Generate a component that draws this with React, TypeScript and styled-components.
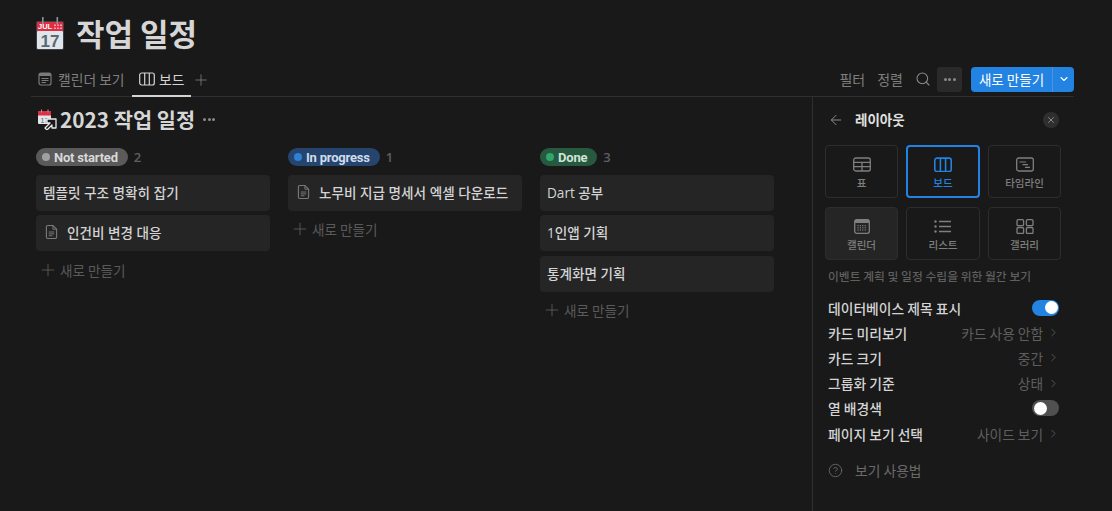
import React from "react";
import styled, { createGlobalStyle } from "styled-components";
import { ArrowLeft, ChevronDown, ChevronRight, CircleHelp, Plus, Search, X } from "lucide-react";

const Global = createGlobalStyle`
  html, body { margin: 0; padding: 0; background: #191919; height: 100%; overflow: hidden; }
  #root { height: 100%; }
  * { box-sizing: border-box; }
`;

const Page = styled.div`
  width: 1112px; height: 511px; background: #191919; overflow: hidden;
  display: flex; flex-direction: column;
  font-family: "Open Sans", "Noto Sans CJK KR", sans-serif;
  color: #d4d4d4;
`;
const Header = styled.header`
  height: 97px; padding: 0 38px 0 31px; display: flex; flex-direction: column; flex: none;
`;
const TitleRow = styled.div`
  height: 66px; padding: 12px 0 0 4px; display: flex; align-items: flex-start; gap: 11px;
`;
const Title = styled.h1`
  margin: 0; font-size: 31px; line-height: 42px; font-weight: 700; color: #d6d6d6;
  font-family: "Noto Sans CJK KR", sans-serif; white-space: nowrap;
`;
const TabBar = styled.div`
  height: 31px; display: flex; align-items: flex-start; border-bottom: 1px solid #2f2f2f;
`;
const Tab = styled.div<{ $active?: boolean }>`
  height: 31px; display: flex; align-items: center; gap: ${(p) => (p.$active ? "4px" : "6px")};
  padding: 0 7px 3px; width: ${(p) => (p.$active ? "59px" : "101px")};
  font-size: 13.8px; white-space: nowrap;
  color: ${(p) => (p.$active ? "#d4d4d4" : "#7f7f7f")};
  border-bottom: ${(p) => (p.$active ? "2px solid #d4d4d4" : "2px solid transparent")};
  font-family: "Noto Sans CJK KR", sans-serif;
  svg { flex: none; }
`;
const TabPlus = styled.div`
  height: 28px; width: 20px; display: flex; align-items: center; justify-content: center; color: #777;
`;
const Spacer = styled.div`flex: 1;`;
const Tools = styled.div`
  height: 26px; display: flex; align-items: center;
`;
const ToolText = styled.span<{ $last?: boolean }>`
  font-size: 14px; color: #7f7f7f; margin-right: ${(p) => (p.$last ? "7px" : "12px")}; white-space: nowrap;
  font-family: "Noto Sans CJK KR", sans-serif;
`;
const IconBtn = styled.div<{ $on?: boolean }>`
  width: 25px; height: 25px; border-radius: 3px; display: flex; align-items: center; justify-content: center;
  background: ${(p) => (p.$on ? "#2a2a2a" : "transparent")};
  margin-left: ${(p) => (p.$on ? "2px" : "0")};
  color: #8a8a8a;
`;
const NewButton = styled.div`
  margin-left: 9px; height: 25px; width: 103px; display: flex; border-radius: 4px; background: #2383e2; color: #fff;
  font-size: 13.5px; font-family: "Noto Sans CJK KR", sans-serif;
`;
const NewMain = styled.div`
  flex: 1; display: flex; align-items: center; justify-content: center; white-space: nowrap;
  border-right: 1px solid #4b95de;
`;
const NewDrop = styled.div`
  width: 21px; display: flex; align-items: center; justify-content: center;
`;
const Body = styled.div`
  flex: 1; display: flex; min-height: 0;
`;
const Board = styled.main`
  flex: 1; padding: 8px 0 0 36px; display: flex; flex-direction: column; min-width: 0;
`;
const DbTitleRow = styled.div`
  height: 28px; display: flex; align-items: center; margin-bottom: 15px;
`;
const DbTitle = styled.h2`
  margin: 0 8px 0 0; font-size: 20.8px; font-weight: 700; line-height: 28px; color: #d6d6d6; white-space: nowrap;
  font-family: "Noto Sans CJK KR", sans-serif;
`;
const Dots = styled.div`
  display: flex; gap: 1.5px; align-items: center;
`;
const Dot = styled.i<{ $size?: number; $color?: string }>`
  display: block; width: ${(p) => p.$size ?? 3}px; height: ${(p) => p.$size ?? 3}px; border-radius: 50%;
  background: ${(p) => p.$color ?? "#8a8a8a"}; flex: none;
`;
const Columns = styled.div`
  display: flex; gap: 18px;
`;
const Column = styled.section`
  width: 234px; display: flex; flex-direction: column;
`;
const GroupHeader = styled.div`
  height: 18px; display: flex; align-items: center; gap: 6px; margin-bottom: 9px;
`;
const Pill = styled.div<{ $bg: string; $fg: string }>`
  height: 18px; padding: 0 10px 0 6px; border-radius: 9px; background: ${(p) => p.$bg}; color: ${(p) => p.$fg};
  display: flex; align-items: center; gap: 4px; font-size: 13px; font-weight: 700; white-space: nowrap;
  letter-spacing: -0.2px; font-family: Roboto, "Noto Sans CJK KR", sans-serif;
`;
const Count = styled.span`
  font-size: 13px; color: #5f5f5f; font-weight: 600;
`;
const Card = styled.div`
  height: 36px; border-radius: 4px; background: #252525; display: flex; align-items: center; padding: 0 7px 2px;
  font-size: 13.6px; color: #d4d4d4; font-weight: 500; margin-bottom: 4.4px; white-space: nowrap; gap: 6px;
  font-family: "Open Sans", "Noto Sans CJK KR", sans-serif;
  svg { flex: none; margin-left: 2px; }
`;
const CardText = styled.span<{ $icon?: boolean }>`
  margin-left: ${(p) => (p.$icon ? "3px" : "0")};
`;
const AddRow = styled.div`
  height: 36px; margin-top: -4px; display: flex; align-items: center; gap: 2px; padding: 0 0 0 2px; color: #5a5a5a;
  font-size: 13.6px; font-family: "Noto Sans CJK KR", sans-serif;
`;
const Panel = styled.aside`
  width: 300px; flex: none; border-left: 1px solid #2f2f2f; padding: 0 51px 0 12px;
  display: flex; flex-direction: column;
`;
const PanelHead = styled.div`
  height: 46px; display: flex; align-items: center; padding: 0 0 0 3px; margin-bottom: 2px;
`;
const PanelTitle = styled.div`
  flex: 1; margin: 0 0 3px 11px; font-size: 13.5px; font-weight: 700; color: #e0e0e0;
  font-family: "Noto Sans CJK KR", sans-serif;
`;
const CloseBtn = styled.div`
  width: 16px; height: 16px; border-radius: 50%; background: #2f2f2f; color: #9a9a9a; margin-right: 2px;
  display: flex; align-items: center; justify-content: center;
`;
const LayoutGrid = styled.div`
  display: grid; grid-template-columns: 73px 74px 73px; grid-auto-rows: 53px; column-gap: 8px; row-gap: 9px;
  width: 236px; margin-right: -16px;
`;
const Tile = styled.div<{ $sel?: boolean; $hover?: boolean }>`
  border-radius: 4px;
  border: ${(p) => (p.$sel ? "2px solid #2383e2" : "1px solid #2d2d2d")};
  background: ${(p) => (p.$hover ? "#252525" : "transparent")};
  color: ${(p) => (p.$sel ? "#2383e2" : "#7f7f7f")};
  display: flex; flex-direction: column; align-items: center; justify-content: center; gap: 3px;
  font-size: 10.5px; font-weight: 500; font-family: "Noto Sans CJK KR", sans-serif;
  padding-top: 4px;
  span { line-height: 15px; }
`;
const Desc = styled.div`
  margin: 7px -20px 0 3px; font-size: 11.8px; line-height: 18px; color: #5f5f5f; white-space: nowrap;
  font-family: "Noto Sans CJK KR", sans-serif; font-weight: 500;
`;
const Rows = styled.div`
  margin: 10px -1px 0 3px; display: flex; flex-direction: column; width: 231px;
`;
const Row = styled.div`
  height: 25.2px; display: flex; align-items: center; justify-content: space-between;
  font-size: 13.8px; font-weight: 500; color: #d4d4d4; white-space: nowrap;
  font-family: "Noto Sans CJK KR", sans-serif;
`;
const RowValue = styled.div`
  display: flex; align-items: center; gap: 4px; color: #5f5f5f; font-weight: 400; font-size: 13.7px;
  margin-right: -1px;
`;
const Toggle = styled.div<{ $on?: boolean }>`
  width: 27px; height: 16px; border-radius: 8px; background: ${(p) => (p.$on ? "#2383e2" : "#505050")};
  display: flex; align-items: center; padding: 1.5px; justify-content: ${(p) => (p.$on ? "flex-end" : "flex-start")};
`;
const Knob = styled.i`
  display: block; width: 13px; height: 13px; border-radius: 50%; background: #fff;
`;
const Help = styled.div`
  margin: 13px 0 0 3px; height: 22px; display: flex; align-items: center; gap: 12px; color: #6a6a6a; font-size: 13.8px;
  font-family: "Noto Sans CJK KR", sans-serif;
`;

const BigCalendarSvg = styled.svg`
  flex: none; margin-top: 5px;
`;
const BigCalendar = () => (
  <BigCalendarSvg width={30} height={34} viewBox="0 0 30 34" aria-hidden>
    <rect x="1" y="4" width="28" height="29" rx="2" fill="#3a4046" />
    <rect x="2" y="14" width="26" height="18" rx="1" fill="#dfe5ea" />
    <rect x="2" y="5" width="26" height="9" fill="#dd2e44" />
    <rect x="7" y="0" width="1.6" height="7" fill="#8a939b" />
    <rect x="21.5" y="0" width="1.6" height="7" fill="#8a939b" />
    <text x="3" y="12.3" fontSize="7.5" fontWeight="700" fill="#fff" fontFamily="Liberation Sans, sans-serif">JUL</text>
    <g fill="#f4a0ac">
      <rect x="19" y="7.5" width="2" height="1.5" /><rect x="22" y="7.5" width="2" height="1.5" /><rect x="25" y="7.5" width="2" height="1.5" />
      <rect x="19" y="10.5" width="2" height="1.5" /><rect x="22" y="10.5" width="2" height="1.5" /><rect x="25" y="10.5" width="2" height="1.5" />
    </g>
    <text x="15" y="30" textAnchor="middle" fontSize="17" fontWeight="700" fill="#5b6872" fontFamily="Liberation Sans, sans-serif">17</text>
  </BigCalendarSvg>
);

const LinkedCalendar = () => (
  <svg width="24" height="22" viewBox="0 0 24 22" aria-hidden style={{ flex: "none" }}>
    <rect x="2" y="3" width="13" height="13" rx="1" fill="#dfe5ea" />
    <rect x="2" y="3" width="13" height="4.5" fill="#dd2e44" />
    <rect x="5" y="1.5" width="1" height="3" fill="#9aa3ab" />
    <rect x="11.5" y="1.5" width="1" height="3" fill="#9aa3ab" />
    <text x="8.5" y="14.5" textAnchor="middle" fontSize="7" fill="#5b6872" fontFamily="Liberation Sans, sans-serif">17</text>
    <path d="M11 11H20V20H16V17L11 22L9 20L14 15H11Z" fill="#191919" stroke="#e8e8e8" strokeWidth="1.3" strokeLinejoin="round" />
  </svg>
);

const CalendarTabIcon = () => (
  <svg width="14" height="14" viewBox="0 0 14 14" aria-hidden>
    <rect x="1" y="1" width="12" height="12" rx="2" fill="none" stroke="#7a7a7a" strokeWidth="1.2" />
    <rect x="1" y="1" width="12" height="3" rx="1.2" fill="#7a7a7a" />
    <path d="M3.5 6.5H10.5M3.5 8.5H10.5M3.5 10.5H8" stroke="#7a7a7a" strokeWidth="1" />
  </svg>
);
const BoardIcon = ({ size = 16, w = 1.2 }: { size?: number; w?: number }) => (
  <svg width={size} height={size * 0.875} viewBox="0 0 16 14" aria-hidden>
    <rect x="0.7" y="1" width="14.6" height="12" rx="2" fill="none" stroke="currentColor" strokeWidth={w} />
    <path d="M5.7 1V13M10.3 1V13" stroke="currentColor" strokeWidth={w} />
  </svg>
);
const TableIcon = () => (
  <svg width="18" height="15" viewBox="0 0 18 15" aria-hidden>
    <rect x="0.7" y="1" width="16.6" height="13" rx="2" fill="none" stroke="currentColor" strokeWidth="1.3" />
    <path d="M0.7 5.3H17.3M0.7 9.7H17.3M9 5.3V14" stroke="currentColor" strokeWidth="1.3" />
  </svg>
);
const TimelineIcon = () => (
  <svg width="18" height="15" viewBox="0 0 18 15" aria-hidden>
    <rect x="0.7" y="1" width="16.6" height="13" rx="2" fill="none" stroke="currentColor" strokeWidth="1.3" />
    <path d="M3.5 5H10M6.5 7.7H12M9 10.4H14" stroke="currentColor" strokeWidth="1.2" />
  </svg>
);
const CalendarTileIcon = () => (
  <svg width="16" height="15" viewBox="0 0 16 15" aria-hidden>
    <rect x="0.7" y="0.7" width="14.6" height="13.6" rx="2" fill="none" stroke="currentColor" strokeWidth="1.3" />
    <rect x="1" y="1" width="14" height="3" fill="currentColor" />
    <g fill="currentColor">
      {[6, 8.2, 10.4].map((y) => [3.4, 5.8, 8.2, 10.6].map((x) => <rect key={`${x}-${y}`} x={x} y={y} width="1.2" height="1.2" />))}
    </g>
  </svg>
);
const ListIcon = () => (
  <svg width="18" height="15" viewBox="0 0 18 15" aria-hidden>
    <path d="M5 2.5H17M5 7.5H17M5 12.5H17" stroke="currentColor" strokeWidth="1.3" />
    <circle cx="1.5" cy="2.5" r="1.2" fill="currentColor" /><circle cx="1.5" cy="7.5" r="1.2" fill="currentColor" /><circle cx="1.5" cy="12.5" r="1.2" fill="currentColor" />
  </svg>
);
const GalleryIcon = () => (
  <svg width="18" height="15" viewBox="0 0 18 15" aria-hidden>
    <rect x="1" y="0.7" width="6.6" height="6" rx="1.3" fill="none" stroke="currentColor" strokeWidth="1.3" />
    <rect x="10.4" y="0.7" width="6.6" height="6" rx="1.3" fill="none" stroke="currentColor" strokeWidth="1.3" />
    <rect x="1" y="8.5" width="6.6" height="6" rx="1.3" fill="none" stroke="currentColor" strokeWidth="1.3" />
    <rect x="10.4" y="8.5" width="6.6" height="6" rx="1.3" fill="none" stroke="currentColor" strokeWidth="1.3" />
  </svg>
);
const DocIcon = () => (
  <svg width="13" height="16" viewBox="0 0 14 16" aria-hidden>
    <path d="M3 1H8.5L12.5 5V13.5A1.5 1.5 0 0 1 11 15H3A1.5 1.5 0 0 1 1.5 13.5V2.5A1.5 1.5 0 0 1 3 1Z" fill="none" stroke="#7a7a7a" strokeWidth="1.2" />
    <path d="M8.5 1V5H12.5M4 8H10M4 10H10M4 12H8" fill="none" stroke="#7a7a7a" strokeWidth="1" />
  </svg>
);

type CardData = { text: string; doc?: boolean };
const columns: { name: string; bg: string; fg: string; dot: string; cards: CardData[] }[] = [
  { name: "Not started", bg: "#5a5a5a", fg: "#d8d8d8", dot: "#a0a0a0", cards: [{ text: "템플릿 구조 명확히 잡기" }, { text: "인건비 변경 대응", doc: true }] },
  { name: "In progress", bg: "#26456e", fg: "#cfdcec", dot: "#2e7fd6", cards: [{ text: "노무비 지급 명세서 엑셀 다운로드", doc: true }] },
  { name: "Done", bg: "#26593f", fg: "#cfe3d7", dot: "#2ea76a", cards: [{ text: "Dart 공부" }, { text: "1인앱 기획" }, { text: "통계화면 기획" }] },
];

const rows: { label: string; value?: string; toggle?: boolean }[] = [
  { label: "데이터베이스 제목 표시", toggle: true },
  { label: "카드 미리보기", value: "카드 사용 안함" },
  { label: "카드 크기", value: "중간" },
  { label: "그룹화 기준", value: "상태" },
  { label: "열 배경색", toggle: false },
  { label: "페이지 보기 선택", value: "사이드 보기" },
];

export default function App() {
  return (
    <Page>
      <Global />
      <Header>
        <TitleRow>
          <BigCalendar />
          <Title>작업 일정</Title>
        </TitleRow>
        <TabBar>
          <Tab><CalendarTabIcon />캘린더 보기</Tab>
          <Tab $active><BoardIcon size={16} />보드</Tab>
          <TabPlus><Plus size={18} strokeWidth={1.2} /></TabPlus>
          <Spacer />
          <Tools>
            <ToolText>필터</ToolText>
            <ToolText $last>정렬</ToolText>
            <IconBtn><Search size={16} strokeWidth={1.6} /></IconBtn>
            <IconBtn $on>
              <Dots><Dot /><Dot /><Dot /></Dots>
            </IconBtn>
            <NewButton>
              <NewMain>새로 만들기</NewMain>
              <NewDrop><ChevronDown size={12} strokeWidth={2.2} /></NewDrop>
            </NewButton>
          </Tools>
        </TabBar>
      </Header>
      <Body>
        <Board>
          <DbTitleRow>
            <LinkedCalendar />
            <DbTitle>2023 작업 일정</DbTitle>
            <Dots><Dot /><Dot /><Dot /></Dots>
          </DbTitleRow>
          <Columns>
            {columns.map((c) => (
              <Column key={c.name}>
                <GroupHeader>
                  <Pill $bg={c.bg} $fg={c.fg}>
                    <Dot $size={8} $color={c.dot} />
                    {c.name}
                  </Pill>
                  <Count>{c.cards.length}</Count>
                </GroupHeader>
                {c.cards.map((card) => (
                  <Card key={card.text}>
                    {card.doc && <DocIcon />}
                    <CardText $icon={card.doc}>{card.text}</CardText>
                  </Card>
                ))}
                <AddRow><Plus size={20} strokeWidth={1.1} />새로 만들기</AddRow>
              </Column>
            ))}
          </Columns>
        </Board>
        <Panel>
          <PanelHead>
            <ArrowLeft size={16} strokeWidth={1.5} color="#8a8a8a" />
            <PanelTitle>레이아웃</PanelTitle>
            <CloseBtn><X size={10} strokeWidth={2} /></CloseBtn>
          </PanelHead>
          <LayoutGrid>
            <Tile><TableIcon /><span>표</span></Tile>
            <Tile $sel><BoardIcon size={18} w={1.4} /><span>보드</span></Tile>
            <Tile><TimelineIcon /><span>타임라인</span></Tile>
            <Tile $hover><CalendarTileIcon /><span>캘린더</span></Tile>
            <Tile><ListIcon /><span>리스트</span></Tile>
            <Tile><GalleryIcon /><span>갤러리</span></Tile>
          </LayoutGrid>
          <Desc>이벤트 계획 및 일정 수립을 위한 월간 보기</Desc>
          <Rows>
            {rows.map((r) => (
              <Row key={r.label}>
                {r.label}
                {r.value ? (
                  <RowValue>{r.value}<ChevronRight size={13} strokeWidth={1.5} /></RowValue>
                ) : (
                  <Toggle $on={r.toggle}><Knob /></Toggle>
                )}
              </Row>
            ))}
          </Rows>
          <Help><CircleHelp size={15} strokeWidth={1.4} />보기 사용법</Help>
        </Panel>
      </Body>
    </Page>
  );
}
